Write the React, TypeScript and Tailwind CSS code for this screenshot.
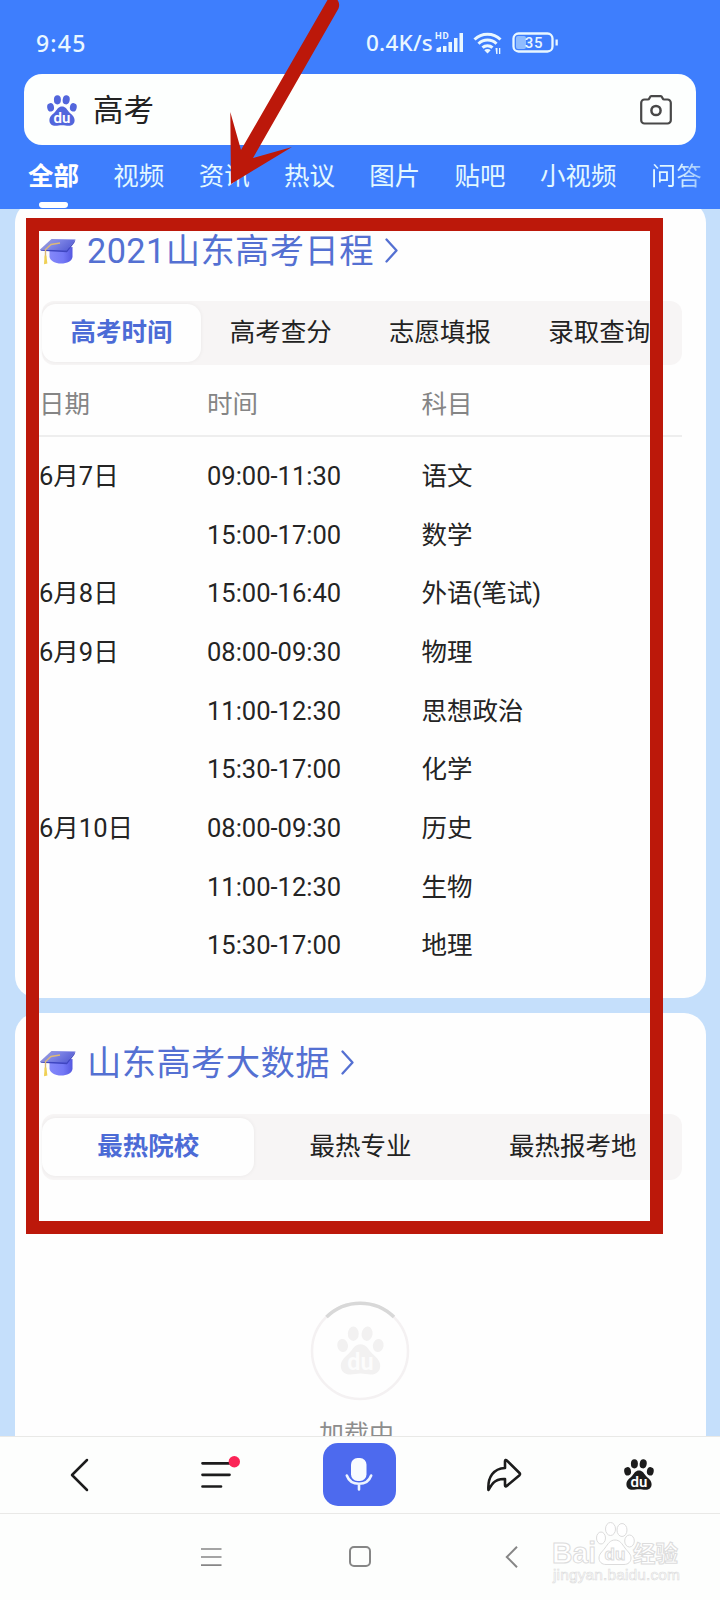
import type { ReactNode } from "react";
import clsx from "clsx";

const channels = ["全部", "视频", "资讯", "热议", "图片", "贴吧", "小视频", "问答"];

const schedule = [
  { date: "6月7日", time: "09:00-11:30", subject: "语文" },
  { date: "", time: "15:00-17:00", subject: "数学" },
  { date: "6月8日", time: "15:00-16:40", subject: "外语(笔试)" },
  { date: "6月9日", time: "08:00-09:30", subject: "物理" },
  { date: "", time: "11:00-12:30", subject: "思想政治" },
  { date: "", time: "15:30-17:00", subject: "化学" },
  { date: "6月10日", time: "08:00-09:30", subject: "历史" },
  { date: "", time: "11:00-12:30", subject: "生物" },
  { date: "", time: "15:30-17:00", subject: "地理" },
];

const Paw = ({ className, label = "#fff" }: { className?: string; label?: string }) => (
  <svg viewBox="0 0 30 31" className={className} fill="currentColor">
    <ellipse cx="3.6" cy="12.3" rx="3.4" ry="4.2" transform="rotate(-10 3.6 12.3)" />
    <ellipse cx="10.4" cy="4.8" rx="3.5" ry="4.6" />
    <ellipse cx="19.2" cy="4.8" rx="3.5" ry="4.6" transform="rotate(8 19.2 4.8)" />
    <ellipse cx="26.3" cy="12.3" rx="3.4" ry="4.2" transform="rotate(10 26.3 12.3)" />
    <path d="M15 11.5c3.4 0 4.6 2.6 6.6 5 2.2 2.6 6 4.7 6 8.7 0 3.6-2.6 5.6-6 5.6-2.4 0-4-.6-6.600-.6s-4.200.6-6.600.6c-3.400 0-6-2-6-5.600 0-4 3.800-6.100 6-8.700 2-2.400 3.200-5 6.600-5z" />
    <text x="15" y="28" textAnchor="middle" fontSize="15" fontWeight="600" fontFamily="Roboto, sans-serif" fill={label}>
      du
    </text>
  </svg>
);

const GradCap = () => (
  <svg width="36" height="27" viewBox="0 0 36 27" className="shrink-0">
    <defs>
      <linearGradient id="capTop" x1="0" y1="0" x2="1" y2="0.4">
        <stop offset="0" stopColor="#a3a3d0" />
        <stop offset="0.5" stopColor="#7f86e6" />
        <stop offset="1" stopColor="#5a62d6" />
      </linearGradient>
      <linearGradient id="capBase" x1="0" y1="0" x2="1" y2="0">
        <stop offset="0" stopColor="#8488fa" />
        <stop offset="0.6" stopColor="#7378f6" />
        <stop offset="1" stopColor="#5558e0" />
      </linearGradient>
    </defs>
    <path d="M9.500 11L32.500 9v9.500c0 4.500-5.500 7-11.500 7S10.500 23 9.500 19z" fill="url(#capBase)" />
    <path d="M11.500 1L35.500 1.500 27 12.500 0 11.500z" fill="url(#capTop)" />
    <path d="M0 11.500l26.800 1L35.500 1.500l-1 3L27 14.300 1 12.800z" fill="#3f46c0" />
    <path d="M20 5L11 6.500 5.500 11.500v9" stroke="#dcb878" strokeWidth="1.400" fill="none" />
    <path d="M4.600 17.500h1.800l1 8-3.400.8z" fill="#efd055" />
  </svg>
);

const StatusBar = () => (
  <div className="flex h-[74px] items-center pt-3 pl-9 font-['Noto_Sans',sans-serif] text-[23px] font-medium text-[#e9f7ff]">
    <span className="w-[330px] tracking-[1.2px]">9:45</span>
    <span className="w-[69px] text-[22.500px] tracking-[0.2px] whitespace-nowrap">0.4K/s</span>
    <svg width="126" height="25" viewBox="0 0 126 25" className="-mt-px" fill="currentColor">
      <text x="0" y="8.500" fontSize="9.500" fontWeight="700" fontFamily="Roboto, sans-serif" letterSpacing="0.8">HD</text>
      <path d="M1.500 18.500l4.500-2V22H1.500zM8 16h3.500v6H8zM13.500 12h3.500v10h-3.500zM19 8h3.500v14H19zM24.500 3H28v19h-3.500z" />
      <g fill="none" stroke="currentColor" strokeWidth="3">
        <path d="M39.500 9.500a18.500 18.500 0 0 1 26 0" />
        <path d="M43.500 13.700a12.800 12.800 0 0 1 18 0" />
        <path d="M47.500 17.700a7.200 7.200 0 0 1 10 0" />
      </g>
      <path d="M49.300 20.200a4.600 4.600 0 0 1 6.400 0l-3.200 3.200z" />
      <path d="M60.500 18h2v6h-1.300zM64 18h1.300v6H64z" />
      <rect x="78.500" y="3.500" width="39" height="18" rx="5" fill="none" stroke="currentColor" strokeWidth="2.300" />
      <rect x="81" y="6" width="10" height="13" rx="2" fill="#8fbcff" />
      <path d="M120.500 9.500h2.300v6h-2.300z" />
      <text x="99" y="18" textAnchor="middle" fontSize="15" fontWeight="500" fontFamily="Roboto, sans-serif" letterSpacing="0.8">35</text>
    </svg>
  </div>
);

const SearchBox = () => (
  <div className="mx-6 flex h-[71px] items-center rounded-[18px] bg-[#fdfffe] pt-px pr-6 pl-[23px]">
    <Paw className="h-[31px] w-[30px] text-[#5266dc]" />
    <span className="mt-px ml-4 flex-1 text-[30.500px] text-[#222]">高考</span>
    <svg width="32" height="30" viewBox="0 0 32 30" fill="none" stroke="#484848" strokeWidth="2.200" strokeLinejoin="round">
      <path d="M4.500 4.500h3.300c.8 0 1.200-.3 1.500-1l.6-1.300c.3-.7.700-1 1.400-1h9.400c.7 0 1.100.3 1.400 1l.6 1.300c.3.700.7 1 1.500 1h3.300A3.300 3.300 0 0 1 30.800 7.800v17.400a3.300 3.300 0 0 1-3.300 3.300h-23a3.300 3.300 0 0 1-3.300-3.300V7.800a3.300 3.300 0 0 1 3.300-3.300z" />
      <circle cx="16" cy="15.500" r="4.600" strokeWidth="2.500" />
    </svg>
  </div>
);

const Channels = () => (
  <nav className="flex h-[64px] gap-[34.300px] pl-[28px] text-[25.500px] whitespace-nowrap text-[#e3f8ff]">
    {channels.map((name, i) => (
      <div key={name} className="flex shrink-0 flex-col items-center justify-between pt-[12px]">
        <span
          className={clsx(
            "leading-[38px]",
            i === 0 && "font-bold text-white",
            name === "问答" && "bg-gradient-to-r from-[#e3f8ff] from-45% to-[#9cc4fc] bg-clip-text text-transparent",
          )}
        >
          {name}
        </span>
        {i === 0 && <span className="mb-px h-[6px] w-[29px] rounded-t-[3px] rounded-b-sm bg-white" />}
      </div>
    ))}
  </nav>
);

const CardTitle = ({ children }: { children: ReactNode }) => (
  <h2 className="flex h-[50px] items-center text-[34.300px] leading-[50px] tracking-[0.4px] text-[#5470d2]">
    <GradCap />
    <span className="ml-[11px]">{children}</span>
    <svg width="13" height="25" viewBox="0 0 13 25" className="-mt-[2px] ml-[11px]" fill="none" stroke="currentColor" strokeWidth="2.300" strokeLinecap="round" strokeLinejoin="round">
      <path d="M1.500 1.500l10 11-10 11" />
    </svg>
  </h2>
);

const Tabs = ({ items, className }: { items: string[]; className: string }) => (
  <div className={clsx("flex rounded-xl bg-[#f7f5f5] pr-[3px] text-[25.500px] text-[#222]", className)}>
    {items.map((item, i) => (
      <div
        key={item}
        className={clsx(
          "flex flex-1 items-center justify-center rounded-[14px] pb-px whitespace-nowrap",
          i === 0 && "bg-[#fefefe] font-bold text-[#4c6bd6] shadow-[0_0_4px_rgba(0,0,0,0.06)]",
        )}
      >
        {item}
      </div>
    ))}
  </div>
);

const ScheduleCard = () => (
  <section className="-mt-2 h-[797px] rounded-[22px] bg-[#fefefe] pt-[25px] pr-[24px] pl-[25px]">
    <CardTitle>2021山东高考日程</CardTitle>
    <Tabs items={["高考时间", "高考查分", "志愿填报", "录取查询"]} className="mt-[25px] ml-[2px] h-[64px] py-[3px]" />
    <div className="-ml-px grid h-[72px] grid-cols-[168px_214.500px_1fr] items-center border-b-2 border-[#eeeeee] pt-[8px] text-[25.500px] text-[#858585]">
      <span>日期</span>
      <span>时间</span>
      <span>科目</span>
    </div>
    <div className="-ml-px pt-[10px] text-[25.500px] text-[#242424]">
      {schedule.map((row) => (
        <div key={row.time + row.subject} className="grid h-[58.650px] grid-cols-[168px_214.500px_1fr] items-center">
          <span>{row.date}</span>
          <span>{row.time}</span>
          <span>{row.subject}</span>
        </div>
      ))}
    </div>
  </section>
);

const BigDataCard = () => (
  <section className="mt-[15px] flex h-[600px] flex-col rounded-t-[22px] bg-[#fefefe] pt-[25px] pr-[24px] pl-[25px]">
    <CardTitle>山东高考大数据</CardTitle>
    <Tabs items={["最热院校", "最热专业", "最热报考地"]} className="mt-[26px] ml-[2px] h-[66px] shrink-0 py-[4px]" />
    <div className="mt-[121px] flex flex-col items-center pr-[2px]">
      <div className="relative flex h-[100px] w-[100px] items-center justify-center">
        <svg viewBox="0 0 100 100" className="absolute inset-0" fill="none">
          <circle cx="50" cy="50" r="48" stroke="#f4f1f2" strokeWidth="2.500" />
          <path d="M16.500 16a48 48 0 0 1 67.500 0" stroke="#d8d8d8" strokeWidth="3.500" />
        </svg>
        <Paw className="-mt-[2px] h-[51px] w-[47px] text-[#f2f1f1]" label="#fcfcfc" />
      </div>
      <span className="mt-[16px] mr-[7px] text-[25px] leading-[36px] text-[#8d8d8d]">加载中</span>
    </div>
  </section>
);

const BottomBar = () => (
  <div className="relative flex h-[78px] shrink-0 items-center border-y border-[#e9e9e7] bg-[#fdfefd] pb-px text-[#1c1c1c]">
    <svg width="19" height="34" viewBox="0 0 19 34" className="ml-[70px]" fill="none" stroke="currentColor" strokeWidth="2.500" strokeLinecap="round" strokeLinejoin="round">
      <path d="M17 2L2 17l15 15" />
    </svg>
    <svg width="42" height="36" viewBox="0 0 42 36" className="-mt-px ml-[111px]" fill="none">
      <path d="M2.500 7.300h27M2.500 18.800h27M2.500 30.500h18.500" stroke="currentColor" strokeWidth="2.700" strokeLinecap="round" />
      <circle cx="34.300" cy="5.700" r="5.700" fill="#fb2456" />
    </svg>
    <div className="ml-[81px] flex h-[63px] w-[73px] items-center justify-center rounded-[15px] bg-[#4d6aee]">
      <svg width="28" height="36" viewBox="0 0 28 36" fill="none" className="-ml-[2px]">
        <rect x="6" y="1" width="15.500" height="23" rx="6.500" fill="#f8fbff" />
        <path d="M1.800 18.500c2 5.500 6.500 8.300 12.200 8.300s10.200-2.800 12.200-8.300M14 27v5.500" stroke="#eef5ff" strokeWidth="2.600" strokeLinecap="round" />
      </svg>
    </div>
    <svg width="36" height="34" viewBox="0 0 36 34" className="ml-[90px]" fill="none" stroke="currentColor" strokeWidth="2.600" strokeLinejoin="round">
      <path d="M19 3.200c0-1.200.9-1.600 1.700-.8L33.500 15c.7.700.7 1.500 0 2.200L20.700 28c-.8.700-1.700.3-1.700-.8v-6.200c-6-.3-8.600.6-11.700 3.900-2 2.200-3.200 4.600-4.900 7.100C1.600 19 7.500 10.500 19 10z" />
    </svg>
    <Paw className="ml-[102px] h-[31px] w-[30px] text-[#1c1c1c]" />
  </div>
);

const outline = {
  fill: "#fff",
  stroke: "#dcdcdc",
  strokeWidth: 1,
};

const Watermark = () => (
  <svg width="134" height="66" viewBox="0 0 134 66" className="absolute right-[36px] bottom-[14px]" {...outline}>
    <text x="2" y="43" fontSize="29" fontWeight="700" fontFamily="Liberation Sans, sans-serif" textLength="44" lengthAdjust="spacingAndGlyphs">Bai</text>
    <ellipse cx="51" cy="18" rx="4.500" ry="6" />
    <ellipse cx="60.500" cy="9" rx="5" ry="6.500" />
    <ellipse cx="72" cy="10" rx="5" ry="6.500" />
    <ellipse cx="79.500" cy="21" rx="4.800" ry="6" />
    <path d="M65 20c5 0 7 4 10 8s6 6 6 10c0 4-3 6.500-7 6.500H56c-4 0-7-2.500-7-6.500s3-6 6-10 5-8 10-8z" />
    <text x="65" y="40" textAnchor="middle" fontSize="17" fontWeight="700" fontFamily="Liberation Sans, sans-serif">du</text>
    <text x="83" y="41.500" fontSize="22.500" fontWeight="700" fontFamily="Noto Sans CJK SC, sans-serif">经验</text>
    <text x="3" y="60" fontSize="15.500" strokeWidth="0.6" fontFamily="Liberation Sans, sans-serif" textLength="127">jingyan.baidu.com</text>
  </svg>
);

const SystemNav = () => (
  <div className="relative flex flex-1 items-center bg-[#fdfefd] text-[#868686]">
    <svg width="22" height="22" viewBox="0 0 22 22" className="-mt-px ml-[200px]" stroke="currentColor" strokeWidth="1.700">
      <path d="M1 3h20.500M1 11h20.500M1 19.200h20.500" />
    </svg>
    <span className="-mt-px ml-[127px] h-[21px] w-[22px] rounded-[5px] border-2" />
    <svg width="13" height="22" viewBox="0 0 13 22" className="-mt-px ml-[134px]" fill="none" stroke="currentColor" strokeWidth="2">
      <path d="M12 .8L1.800 11 12 21.200" />
    </svg>
    <Watermark />
  </div>
);

// Red box and arrow drawn over the page to point out the schedule
const Annotation = () => (
  <>
    <div className="absolute top-[218px] left-[26px] z-20 h-[1015.500px] w-[636.500px] border-[13px] border-[#bc180a]" />
    <svg width="120" height="190" viewBox="0 0 120 190" className="absolute top-0 left-[220px] z-20" fill="#bc180a">
      <path d="M107.500 0L21 150 10.300 112l.7 72 61-37-39 11L118.500 8.500c1.200-3 .8-6-1-8.500z" />
    </svg>
  </>
);

const App = () => (
  <div className="relative flex h-[1600px] w-[720px] flex-col overflow-hidden bg-[#c5dffb] font-[Roboto,'Noto_Sans_CJK_SC',sans-serif]">
    <header className="relative z-10 h-[209px] shrink-0 bg-[#3e7efd]">
      <StatusBar />
      <SearchBox />
      <Channels />
    </header>
    <main className="h-[1227px] shrink-0 overflow-hidden pr-[14px] pl-[15px]">
      <ScheduleCard />
      <BigDataCard />
    </main>
    <BottomBar />
    <SystemNav />
    <Annotation />
  </div>
);

export default App;
